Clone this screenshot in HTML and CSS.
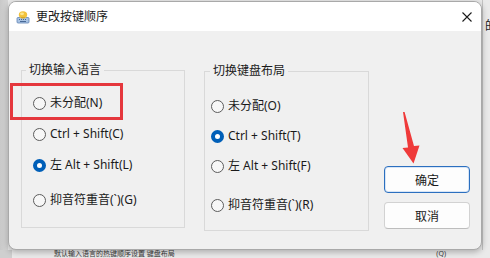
FILE: index.html
```html
<!DOCTYPE html>
<html lang="zh-CN">
<head>
    <meta charset="UTF-8">
    <meta name="viewport" content="width=device-width, initial-scale=1.0">
    <title>更改按键顺序</title>
    <link rel="stylesheet" href="styles.css">
</head>
<body>
    <div class="desktop">
        <div class="window">
            <div class="titlebar">
                <svg class="app-icon" width="14" height="14" viewBox="0 0 14 14">
                    <rect x="1" y="7.5" width="12" height="5.5" rx="1" fill="#a9c3e3" stroke="#5f84b5" stroke-width="0.8"/>
                    <path d="M3 9.5h1M5 9.5h1M7 9.5h1M9 9.5h1M4 11.5h6" stroke="#3d5f8f" stroke-width="0.9"/>
                    <ellipse cx="7" cy="4.8" rx="4.2" ry="3.6" fill="#f2c23c"/>
                    <ellipse cx="6" cy="3.8" rx="2" ry="1.4" fill="#fbe58f"/>
                    <rect x="5" y="7.2" width="4" height="1" fill="#c9a12a"/>
                </svg>
                <span class="title">更改按键顺序</span>
                <button class="close" aria-label="关闭">
                    <svg width="10" height="10" viewBox="0 0 10 10">
                        <path d="M0.5 0.5L9.5 9.5M9.5 0.5L0.5 9.5" stroke="#1b1b1b" stroke-width="1.1"/>
                    </svg>
                </button>
            </div>
            <div class="content">
                <fieldset class="group group-lang">
                    <legend>切换输入语言</legend>
                    <label class="option"><input type="radio" name="lang">未分配(N)</label>
                    <label class="option"><input type="radio" name="lang">Ctrl + Shift(C)</label>
                    <label class="option"><input type="radio" name="lang" checked>左 Alt + Shift(L)</label>
                    <label class="option last"><input type="radio" name="lang">抑音符重音(`)(G)</label>
                </fieldset>
                <fieldset class="group group-layout">
                    <legend>切换键盘布局</legend>
                    <label class="option"><input type="radio" name="layout">未分配(O)</label>
                    <label class="option"><input type="radio" name="layout" checked>Ctrl + Shift(T)</label>
                    <label class="option"><input type="radio" name="layout">左 Alt + Shift(F)</label>
                    <label class="option last"><input type="radio" name="layout">抑音符重音(`)(R)</label>
                </fieldset>
                <div class="actions">
                    <button class="btn btn-default">确定</button>
                    <button class="btn">取消</button>
                </div>
            </div>
            <!-- annotation marks drawn on top of the dialog -->
            <div class="highlight"></div>
            <svg class="arrow" width="30" height="65" viewBox="0 0 30 65">
                <polygon points="8,7 9.6,7 19,41 24.5,40.5 18.5,58.5 7.5,43 13,42.5" fill="#ef3a3a"/>
            </svg>
        </div>
        <div class="side">的</div>
        <div class="behind">
            <span class="behind-text">默认输入语言的热键顺序设置 键盘布局</span>
            <span class="behind-key">(Q)</span>
        </div>
    </div>
</body>
</html>
```

FILE: styles.css
```css
body {
    margin: 0;
    width: 490px;
    height: 258px;
    overflow: hidden;
    background-color: #dcdcdc;
    font-family: "Noto Sans", "Noto Sans CJK SC", sans-serif;
    font-size: 12px;
    color: #1a1a1a;
}

.desktop {
    display: grid;
    grid-template-columns: 8px 474px 8px;
    grid-template-rows: 1px 249px 8px;
    background: linear-gradient(to right, #c9c9c9 0, #d6d6d6 8px, #eaeaea 8px);
}

.window {
    grid-column: 2;
    grid-row: 2;
    position: relative;
    display: flex;
    flex-direction: column;
    background-color: #f0f0f0;
    border: 1px solid #a9a9a9;
    border-radius: 8px;
    box-shadow: 0 2px 6px rgba(0, 0, 0, 0.28);
    overflow: hidden;
    z-index: 1;
}

.titlebar {
    height: 29px;
    display: flex;
    align-items: center;
    background-color: #fff;
    padding-left: 7px;
}

.app-icon {
    flex: none;
}

.title {
    margin-left: 6px;
    flex: 1;
    line-height: 16px;
}

.close {
    width: 28px;
    height: 29px;
    border: none;
    background: none;
    padding: 0;
    display: flex;
    align-items: center;
    justify-content: center;
}

.content {
    display: flex;
    align-items: flex-start;
    padding: 31px 0 0 12px;
}

.group {
    margin: 0;
    min-width: 0;
    border: 1px solid #d9d9d9;
    box-sizing: border-box;
    display: flex;
    flex-direction: column;
}

.group legend {
    margin-left: 4px;
    padding: 0 3px;
    line-height: 16px;
}

.group-lang {
    width: 164px;
    padding: 17px 0 19px 0;
}

.group-lang .option {
    margin-left: 11px;
}

.group-layout {
    width: 165px;
    margin-left: 19px;
    margin-top: 1px;
    padding: 19px 0 17px 0;
}

.group-layout legend {
    margin-left: 5px;
}

.group-layout .option {
    margin-left: 6px;
}

.option {
    display: flex;
    align-items: center;
    height: 16px;
    line-height: 16px;
    white-space: nowrap;
}

.group-lang .option + .option {
    margin-top: 15px;
}

.group-lang .option.last {
    margin-top: 19px;
}

.group-layout .option + .option {
    margin-top: 14px;
}

.group-layout .option.last {
    margin-top: 23px;
}

.option input {
    appearance: none;
    -webkit-appearance: none;
    width: 13px;
    height: 13px;
    margin: 0 4px 0 0;
    border: 1px solid #5c5c5c;
    border-radius: 50%;
    background-color: #f7f7f7;
    box-sizing: border-box;
    flex: none;
}

.option input:checked {
    border: 4px solid #005fb8;
    background-color: #fff;
}

.actions {
    display: flex;
    flex-direction: column;
    margin: 104px 0 0 15px;
}

.btn {
    width: 86px;
    height: 27px;
    font-family: "Noto Sans", "Noto Sans CJK SC", sans-serif;
    font-size: 12px;
    color: #1a1a1a;
    background-color: #fdfdfd;
    border: 1px solid #d2d2d2;
    border-bottom-color: #bdbdbd;
    border-radius: 4px;
    padding: 0;
}

.btn + .btn {
    margin-top: 9px;
}

.btn-default {
    border: 1px solid #2b6fbf;
    box-shadow: inset 0 0 0 1px #d7e5f6;
}

.highlight {
    position: absolute;
    left: 1px;
    top: 81px;
    width: 113px;
    height: 37px;
    box-sizing: border-box;
    border: 3px solid #e5373d;
}

.arrow {
    position: absolute;
    left: 386px;
    top: 103px;
}

.side {
    grid-column: 3;
    grid-row: 1 / span 2;
    padding: 19px 0 0 2px;
    line-height: 14px;
    overflow: hidden;
    white-space: nowrap;
    border-left: 1px solid #c4c4c4;
}

.behind {
    grid-column: 1 / -1;
    grid-row: 3;
    display: flex;
    justify-content: space-between;
    align-items: center;
    overflow: hidden;
    font-size: 7px;
    line-height: 8px;
    padding: 0 44px 0 42px;
    border-left: 12px solid #cfcfcf;
    color: #3a3a3a;
}
```
